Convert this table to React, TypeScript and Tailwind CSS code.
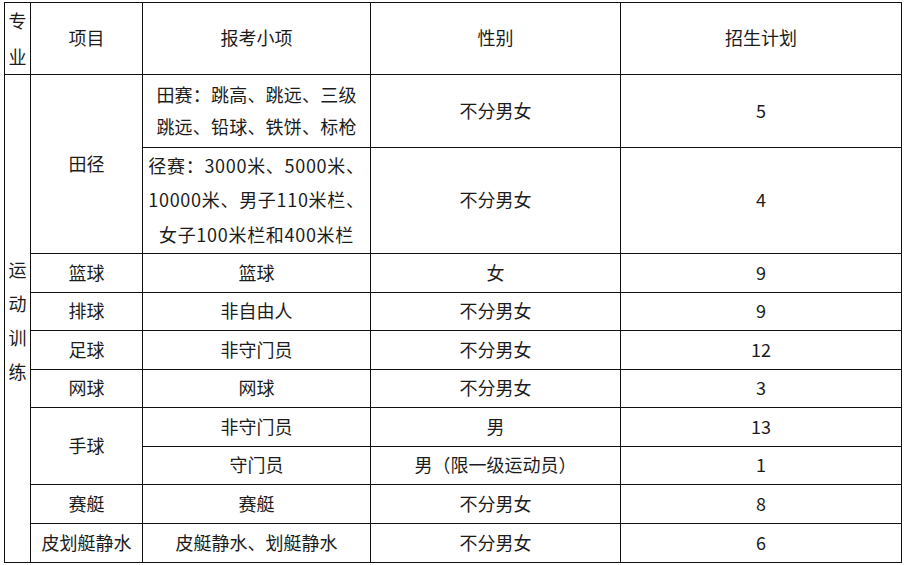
const font = { fontFamily: '"Microsoft YaHei", "Noto Sans CJK SC", "Noto Sans", sans-serif' };

const cell = "bg-white flex items-center justify-center text-center pb-[2px] ";

const App = () => {
  return (
    <div className="w-[906px] h-[565px] bg-white pt-[2px] pl-[4px]" style={font}>
      <div className="grid w-[898px] bg-[#111] border border-[#111] gap-px text-[18px] text-[#1c1c1c] grid-cols-[25px_111px_227px_249px_280px] grid-rows-[71px_72px_105px_38px_37px_38px_37px_38px_37px_38px_38px]">
        {/* header */}
        <div className={cell + "leading-[36px]"}>专<br />业</div>
        <div className={cell}>项目</div>
        <div className={cell}>报考小项</div>
        <div className={cell}>性别</div>
        <div className={cell}>招生计划</div>

        {/* 专业 column */}
        <div className={cell + "row-start-2 row-span-10 col-start-1 leading-[34px] pt-[4px]"}>
          运<br />动<br />训<br />练
        </div>

        {/* 田径 */}
        <div className={cell + "col-start-2 row-start-2 row-span-2"}>田径</div>
        <div className={cell + "col-start-3 row-start-2 leading-[32px] tracking-[0.2px]"}>
          田赛：跳高、跳远、三级<br />跳远、铅球、铁饼、标枪
        </div>
        <div className={cell + "col-start-4 row-start-2"}>不分男女</div>
        <div className={cell + "col-start-5 row-start-2"}>5</div>
        <div className={cell + "col-start-3 row-start-3 leading-[34.5px] tracking-[0.7px] whitespace-nowrap"}>
          径赛：3000米、5000米、<br />10000米、男子110米栏、<br />女子100米栏和400米栏
        </div>
        <div className={cell + "col-start-4 row-start-3"}>不分男女</div>
        <div className={cell + "col-start-5 row-start-3"}>4</div>

        <Row r="row-start-4" a="篮球" b="篮球" c="女" d="9" />
        <Row r="row-start-5" a="排球" b="非自由人" c="不分男女" d="9" />
        <Row r="row-start-6" a="足球" b="非守门员" c="不分男女" d="12" />
        <Row r="row-start-7" a="网球" b="网球" c="不分男女" d="3" />

        {/* 手球 */}
        <div className={cell + "col-start-2 row-start-8 row-span-2"}>手球</div>
        <div className={cell + "col-start-3 row-start-8"}>非守门员</div>
        <div className={cell + "col-start-4 row-start-8"}>男</div>
        <div className={cell + "col-start-5 row-start-8"}>13</div>
        <div className={cell + "col-start-3 row-start-9"}>守门员</div>
        <div className={cell + "col-start-4 row-start-9"}>男（限一级运动员）</div>
        <div className={cell + "col-start-5 row-start-9"}>1</div>

        <Row r="row-start-10" a="赛艇" b="赛艇" c="不分男女" d="8" />
        <Row r="row-start-11" a="皮划艇静水" b="皮艇静水、划艇静水" c="不分男女" d="6" />
      </div>
    </div>
  );
};

const Row = ({ r, a, b, c, d }: { r: string; a: string; b: string; c: string; d: string }) => (
  <>
    <div className={cell + "col-start-2 whitespace-nowrap " + r}>{a}</div>
    <div className={cell + "col-start-3 whitespace-nowrap " + r}>{b}</div>
    <div className={cell + "col-start-4 " + r}>{c}</div>
    <div className={cell + "col-start-5 " + r}>{d}</div>
  </>
);

export default App;
